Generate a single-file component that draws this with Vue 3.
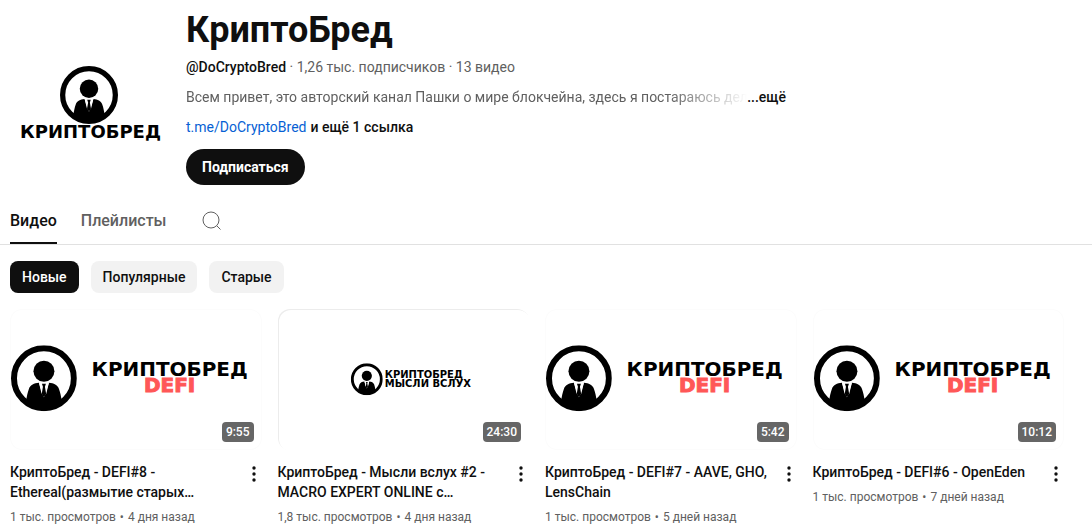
<script setup>
import { ref } from 'vue'

const tabs = ['Видео', 'Плейлисты']
const activeTab = ref('Видео')
const chips = ['Новые', 'Популярные', 'Старые']
const activeChip = ref('Новые')

const videos = [
  { kind: 'defi', time: '9:55', title: 'КриптоБред - DEFI#8 - Ethereal(размытие старых…', views: '1 тыс. просмотров', age: '4 дня назад' },
  { kind: 'talk', time: '24:30', title: 'КриптоБред - Мысли вслух #2 - MACRO EXPERT ONLINE с…', views: '1,8 тыс. просмотров', age: '4 дня назад' },
  { kind: 'defi', time: '5:42', title: 'КриптоБред - DEFI#7 - AAVE, GHO, LensChain', views: '1 тыс. просмотров', age: '5 дней назад' },
  { kind: 'defi', time: '10:12', title: 'КриптоБред - DEFI#6 - OpenEden', views: '1 тыс. просмотров', age: '7 дней назад' },
]
</script>

<template>
  <main class="channel">
    <svg class="defs" width="0" height="0" aria-hidden="true">
      <symbol id="person" viewBox="0 0 66 66">
        <circle cx="33" cy="33" r="30" fill="#fff" stroke="#000" stroke-width="6" />
        <circle cx="33" cy="26" r="10.5" />
        <path d="M28 37.500C23 38 19.500 39.500 18 43.500C16.500 47.500 16 51 15 56C25 65 41 65 51 56C50 51 49.500 47.500 48 43.500C46.500 39.500 43 38 38 37.500L34.500 49L33 52L31.500 49Z" />
        <path d="M28 37.500L30.800 38.500L32 41.500L30.800 49Z M38 37.500L35.200 38.500L34 41.500L35.200 49Z" fill="#fff" />
        <path d="M31 38.500H35L34 41.500L35.200 48.500L33 52L30.800 48.500L32 41.500Z" />
      </symbol>
    </svg>

    <header class="head">
      <svg class="avatar" viewBox="0 0 160 160" role="img" aria-label="КриптоБред">
        <use href="#person" x="50" y="49" width="58" height="58" />
        <text class="brand brand-avatar" x="80.500" y="121" text-anchor="middle">КРИПТОБРЕД</text>
      </svg>
      <div class="info">
        <h1>КриптоБред</h1>
        <p class="stats"><span class="handle">@DoCryptoBred</span> · 1,26 тыс. подписчиков · 13 видео</p>
        <div class="about">
          <p class="about-text">Всем привет, это авторский канал Пашки о мире блокчейна, здесь я постараюсь дели</p>
          <button type="button" class="plain">...ещё</button>
        </div>
        <div class="links">
          <a href="#">t.me/DoCryptoBred</a>
          <button type="button" class="plain">и ещё 1 ссылка</button>
        </div>
        <button type="button" class="subscribe">Подписаться</button>
      </div>
    </header>

    <nav class="tabs">
      <button
        v-for="tab in tabs"
        :key="tab"
        type="button"
        class="tab"
        :class="{ active: tab === activeTab }"
        @click="activeTab = tab"
      >{{ tab }}</button>
      <button type="button" class="search" aria-label="Поиск">
        <svg viewBox="0 0 24 24" width="24" height="24" fill="none" stroke="#606060">
          <circle cx="11" cy="11" r="8" />
          <path d="M16.700 16.700L20.500 20.500" />
        </svg>
      </button>
    </nav>

    <div class="chips">
      <button
        v-for="chip in chips"
        :key="chip"
        type="button"
        class="chip"
        :class="{ active: chip === activeChip }"
        @click="activeChip = chip"
      >{{ chip }}</button>
    </div>

    <section class="grid">
      <article v-for="video in videos" :key="video.title">
        <a href="#" class="thumb" :class="video.kind" :aria-label="video.title">
          <svg v-if="video.kind === 'defi'" viewBox="0 0 252 141">
            <use href="#person" x="1" y="36" width="66" height="66" />
            <text class="brand brand-large" x="160" y="67" text-anchor="middle">КРИПТОБРЕД</text>
            <text class="brand brand-defi" x="160" y="83" text-anchor="middle">DEFI</text>
          </svg>
          <svg v-else viewBox="0 0 252 141">
            <use href="#person" x="73" y="54" width="32" height="32" />
            <text class="brand brand-small" x="107" y="69">КРИПТОБРЕД</text>
            <text class="brand brand-small" x="107" y="78">МЫСЛИ ВСЛУХ</text>
          </svg>
          <span class="time">{{ video.time }}</span>
        </a>
        <div class="details">
          <div class="words">
            <h3><a href="#">{{ video.title }}</a></h3>
            <p class="meta">
              <span>{{ video.views }}</span>
              <span>•</span>
              <span>{{ video.age }}</span>
            </p>
          </div>
          <button type="button" class="more" aria-label="Ещё">
            <svg viewBox="0 0 24 24" width="24" height="24" fill="#0f0f0f">
              <circle cx="12" cy="6" r="1.700" />
              <circle cx="12" cy="12" r="1.700" />
              <circle cx="12" cy="18" r="1.700" />
            </svg>
          </button>
        </div>
      </article>
    </section>
  </main>
</template>

<style>
body {
  margin: 0;
  background: #fff;
}
</style>

<style scoped>
.channel {
  font-family: Roboto, "Liberation Sans", sans-serif;
  font-size: 14px;
  line-height: 20px;
  color: #0f0f0f;
  overflow: hidden;
}
.defs {
  position: absolute;
}
h1, h3, p {
  margin: 0;
}
button {
  font: inherit;
  color: inherit;
  border: 0;
  padding: 0;
  background: none;
  cursor: pointer;
}
a {
  color: inherit;
  text-decoration: none;
}
.brand {
  font-family: "DejaVu Sans", sans-serif;
  font-weight: 700;
  fill: #000;
}
.brand-avatar {
  font-size: 18px;
}
.brand-large {
  font-size: 20px;
}
.brand-defi {
  font-size: 20px;
  fill: #ff5757;
  stroke: #ff5757;
}
.brand-small {
  font-size: 10px;
}
.head {
  display: flex;
  gap: 16px;
  padding: 5px 10px 12px;
}
.avatar {
  flex: none;
  width: 160px;
  height: 160px;
  margin-top: 12px;
}
.info {
  min-width: 0;
}
h1 {
  font-size: 36px;
  line-height: 50px;
  font-weight: 700;
}
.stats {
  margin-top: 2px;
  color: #606060;
}
.handle {
  color: #0f0f0f;
  font-weight: 500;
}
.about {
  display: flex;
  max-width: 600px;
  margin-top: 10px;
  color: #606060;
}
.about-text {
  flex: 1;
  overflow: hidden;
  white-space: nowrap;
  mask-image: linear-gradient(to left, transparent, #000 80px);
}
.plain {
  flex: none;
  color: #0f0f0f;
  font-weight: 500;
}
.links {
  display: flex;
  gap: 4px;
  margin-top: 10px;
}
.links a {
  color: #065fd4;
}
.subscribe {
  margin-top: 12px;
  height: 36px;
  padding: 0 16px;
  border-radius: 18px;
  background: #0f0f0f;
  color: #fff;
  font-weight: 700;
}
.tabs {
  display: flex;
  gap: 24px;
  height: 47px;
  padding: 0 10px;
  border-bottom: 1px solid #e1e1e1;
}
.tab {
  padding-top: 2px;
  font-size: 16px;
  font-weight: 500;
  color: #606060;
  border-bottom: 2px solid transparent;
}
.tab.active {
  color: #0f0f0f;
  border-color: #0f0f0f;
}
.search {
  display: flex;
  align-items: center;
  margin-left: 10px;
}
.chips {
  display: flex;
  gap: 12px;
  padding: 16px 10px;
}
.chip {
  height: 32px;
  padding: 0 12px;
  border-radius: 8px;
  background: #f2f2f2;
  font-weight: 500;
}
.chip.active {
  background: #0f0f0f;
  color: #fff;
}
.grid {
  display: grid;
  grid-template-columns: repeat(4, minmax(0, 1fr));
  gap: 16px;
  padding: 0 28px 0 10px;
}
.thumb {
  display: block;
  position: relative;
  aspect-ratio: 16 / 9;
  border-radius: 12px;
  overflow: hidden;
  box-shadow: inset 0 0 0 1px #fcfcfc;
}
.thumb.talk {
  box-shadow: inset 1px 1px 0 #ececec;
}
.thumb svg {
  display: block;
  width: 100%;
  height: 100%;
}
.time {
  position: absolute;
  right: 8px;
  bottom: 8px;
  padding: 0 4px;
  border-radius: 4px;
  background: #666;
  color: #fff;
  font-size: 12px;
  font-weight: 500;
}
.details {
  display: flex;
  padding-top: 12px;
}
.words {
  flex: 1;
  min-width: 0;
}
h3 {
  font-size: 14px;
  line-height: 20px;
  font-weight: 500;
}
.meta {
  display: flex;
  gap: 4px;
  margin-top: 6px;
  font-size: 12px;
  line-height: 18px;
  color: #606060;
}
.more {
  flex: none;
  width: 24px;
  height: 24px;
  margin-right: -4px;
}
.more svg {
  display: block;
}
</style>
